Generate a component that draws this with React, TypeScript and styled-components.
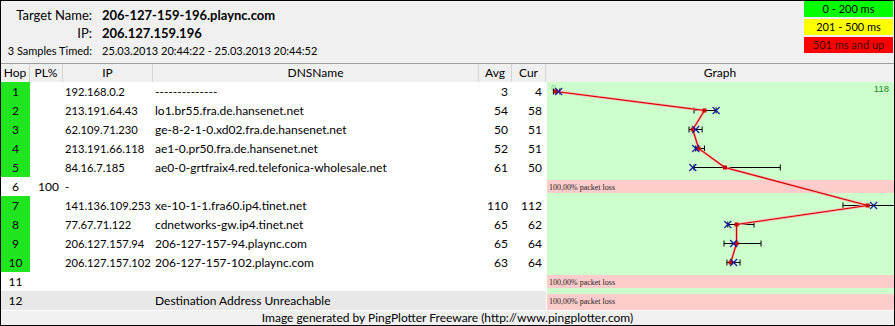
import React from "react";
import styled, { createGlobalStyle } from "styled-components";

const GlobalStyle = createGlobalStyle`
  html, body {
    margin: 0;
    padding: 0;
    background: #ffffff;
  }
  body {
    font-family: Lato, "Noto Sans", sans-serif;
    color: #000;
  }
`;

const COLS = "29px 33px 90px 326px 33px 34px";

// ms -> x inside the graph svg
const SCALE = 2.916;
const gx = (ms: number) => 1 + ms * SCALE;
const rowY = (i: number) => 9.5 + 19 * i;

interface Hop {
  hop: number;
  pl?: string;
  ip?: string;
  dns?: string;
  avg?: number;
  cur?: number;
  min?: number;
  max?: number;
  ok: boolean;
  shade?: boolean;
}

const hops: Hop[] = [
  { hop: 1, ip: "192.168.0.2", dns: "--------------", avg: 3, cur: 4, min: 2.2, max: 4.4, ok: true },
  { hop: 2, ip: "213.191.64.43", dns: "lo1.br55.fra.de.hansenet.net", avg: 54, cur: 58, min: 50.4, max: 58, ok: true },
  { hop: 3, ip: "62.109.71.230", dns: "ge-8-2-1-0.xd02.fra.de.hansenet.net", avg: 50, cur: 51, min: 48.7, max: 53.2, ok: true },
  { hop: 4, ip: "213.191.66.118", dns: "ae1-0.pr50.fra.de.hansenet.net", avg: 52, cur: 51, min: 51, max: 54, ok: true },
  { hop: 5, ip: "84.16.7.185", dns: "ae0-0-grtfraix4.red.telefonica-wholesale.net", avg: 61, cur: 50, min: 50.4, max: 80, ok: true },
  { hop: 6, pl: "100", ip: "-", ok: false },
  { hop: 7, ip: "141.136.109.253", dns: "xe-10-1-1.fra60.ip4.tinet.net", avg: 110, cur: 112, min: 101.5, max: 122, ok: true },
  { hop: 8, ip: "77.67.71.122", dns: "cdnetworks-gw.ip4.tinet.net", avg: 65, cur: 62, min: 62, max: 71, ok: true },
  { hop: 9, ip: "206.127.157.94", dns: "206-127-157-94.plaync.com", avg: 65, cur: 64, min: 60.7, max: 73.4, ok: true },
  { hop: 10, ip: "206.127.157.102", dns: "206-127-157-102.plaync.com", avg: 63, cur: 64, min: 61.7, max: 66.2, ok: true },
  { hop: 11, ok: false },
  { hop: 12, dns: "Destination Address Unreachable", ok: false, shade: true },
];

const Frame = styled.div`
  width: 893px;
  height: 324px;
  border: 1px solid #000;
  background: #f0f0f0;
  display: flex;
  flex-direction: column;
  overflow: hidden;
`;

const InfoBar = styled.div`
  height: 62px;
  display: flex;
  justify-content: space-between;
  align-items: flex-start;
`;

const InfoGrid = styled.div`
  display: grid;
  grid-template-columns: 91px auto;
  grid-template-rows: 19px 18px 17px;
  column-gap: 10px;
  align-items: center;
  padding-top: 4px;
`;

const Label = styled.div<{ $small?: boolean }>`
  text-align: right;
  font-size: ${(p) => (p.$small ? "11px" : "13px")};
  white-space: nowrap;
`;

const Value = styled.div<{ $small?: boolean }>`
  font-size: ${(p) => (p.$small ? "11px" : "13px")};
  font-weight: ${(p) => (p.$small ? 400 : 700)};
  white-space: nowrap;
`;

const Legend = styled.div`
  display: flex;
  flex-direction: column;
  gap: 2px;
  margin-right: 1px;
`;

const LegendBox = styled.div<{ $bg: string; $fg: string }>`
  width: 89px;
  height: 16px;
  line-height: 16px;
  text-align: center;
  font-size: 11px;
  background: ${(p) => p.$bg};
  color: ${(p) => p.$fg};
`;

const HeadRow = styled.div`
  display: grid;
  grid-template-columns: ${COLS} 1fr;
  height: 18px;
  border-top: 1px solid #a0a0a0;
  background: #f0f0f0;
`;

const HeadCell = styled.div<{ $last?: boolean }>`
  font-size: 12px;
  line-height: 18px;
  text-align: center;
  border-right: ${(p) => (p.$last ? "none" : "1px solid #d5d5d5")};
`;

const Body = styled.div`
  display: flex;
  height: 228px;
  background: #fff;
`;

const Columns = styled.div`
  width: 545px;
  display: flex;
  flex-direction: column;
`;

const DataRow = styled.div<{ $shade?: boolean }>`
  display: grid;
  grid-template-columns: ${COLS};
  height: 19px;
  font-size: 12px;
  line-height: 19px;
  background: ${(p) => (p.$shade ? "#e8e8e8" : "#fff")};
`;

const HopCell = styled.div<{ $ok: boolean }>`
  text-align: center;
  background: ${(p) => (p.$ok ? "#1ee51e" : "transparent")};
`;

const Cell = styled.div<{ $right?: boolean; $narrow?: boolean }>`
  white-space: nowrap;
  text-align: ${(p) => (p.$right ? "right" : "left")};
  padding: ${(p) => (p.$right ? "0 4px 0 0" : "0 0 0 2px")};
  font-size: ${(p) => (p.$narrow ? "11.2px" : "12px")};
`;

const Graph = styled.svg`
  display: block;
  width: 348px;
  height: 228px;
`;

const Footer = styled.div`
  height: 14px;
  border-top: 1px solid #fff;
  font-size: 12px;
  line-height: 14px;
  text-align: center;
  background: #f0f0f0;
`;

const Cross: React.FC<{ x: number; y: number }> = ({ x, y }) => (
  <g stroke="#1c1c9c" strokeWidth={1.2}>
    <line x1={x - 3.5} y1={y - 3.5} x2={x + 3.5} y2={y + 3.5} />
    <line x1={x - 3.5} y1={y + 3.5} x2={x + 3.5} y2={y - 3.5} />
  </g>
);

const PingGraph: React.FC = () => {
  const pts = hops
    .map((h, i) => (h.avg !== undefined ? `${gx(h.avg)},${rowY(i)}` : null))
    .filter(Boolean)
    .join(" ");
  return (
    <Graph viewBox="0 0 348 228">
      <rect x={1} y={0} width={347} height={228} fill="#ccffcc" />
      {hops.map((h, i) =>
        h.ok ? null : (
          <g key={h.hop}>
            <rect x={1} y={19 * i + 3} width={347} height={i === 11 ? 16 : 13} fill="#ffcccc" />
            <text x={3} y={19 * i + 13} fontFamily="'Liberation Serif', serif" fontSize={8} fill="#222">
              100,00% packet loss
            </text>
          </g>
        )
      )}
      <text x={5} y={9} fontFamily="'Liberation Sans', sans-serif" fontSize={9} fill="#88c888">0</text>
      <text x={343} y={10} textAnchor="end" fontFamily="'Liberation Sans', sans-serif" fontSize={9.5} fill="#2a8a2a">118</text>
      {hops.map((h, i) =>
        h.min !== undefined && h.max !== undefined ? (
          <g key={h.hop} stroke="#000" strokeWidth={1}>
            <line x1={gx(h.min)} y1={rowY(i)} x2={gx(h.max)} y2={rowY(i)} />
            <line x1={gx(h.min)} y1={rowY(i) - 3} x2={gx(h.min)} y2={rowY(i) + 3} />
            <line x1={gx(h.max)} y1={rowY(i) - 3} x2={gx(h.max)} y2={rowY(i) + 3} />
          </g>
        ) : null
      )}
      <polyline points={pts} fill="none" stroke="#ffaaaa" strokeWidth={2.6} />
      <polyline points={pts} fill="none" stroke="#cc0000" strokeWidth={1.1} />
      {hops.map((h, i) =>
        h.avg !== undefined ? (
          <rect key={h.hop} x={gx(h.avg) - 2} y={rowY(i) - 2} width={4} height={4} fill="#cc0000" />
        ) : null
      )}
      {hops.map((h, i) => (h.cur !== undefined ? <Cross key={h.hop} x={gx(h.cur)} y={rowY(i)} /> : null))}
    </Graph>
  );
};

export default function App() {
  return (
    <>
      <GlobalStyle />
      <Frame>
        <InfoBar>
          <InfoGrid>
            <Label>Target Name:</Label>
            <Value>206-127-159-196.plaync.com</Value>
            <Label>IP:</Label>
            <Value>206.127.159.196</Value>
            <Label $small>3 Samples Timed:</Label>
            <Value $small>25.03.2013 20:44:22 - 25.03.2013 20:44:52</Value>
          </InfoGrid>
          <Legend>
            <LegendBox $bg="#00ff00" $fg="#000">0 - 200 ms</LegendBox>
            <LegendBox $bg="#ffff00" $fg="#000">201 - 500 ms</LegendBox>
            <LegendBox $bg="#ff0000" $fg="#3a0000">501 ms and up</LegendBox>
          </Legend>
        </InfoBar>
        <HeadRow>
          <HeadCell>Hop</HeadCell>
          <HeadCell>PL%</HeadCell>
          <HeadCell>IP</HeadCell>
          <HeadCell>DNSName</HeadCell>
          <HeadCell>Avg</HeadCell>
          <HeadCell>Cur</HeadCell>
          <HeadCell $last>Graph</HeadCell>
        </HeadRow>
        <Body>
          <Columns>
            {hops.map((h) => (
              <DataRow key={h.hop} $shade={h.shade}>
                <HopCell $ok={h.ok}>{h.hop}</HopCell>
                <Cell $right>{h.pl}</Cell>
                <Cell $narrow>{h.ip}</Cell>
                <Cell>{h.dns}</Cell>
                <Cell $right>{h.avg}</Cell>
                <Cell $right>{h.cur}</Cell>
              </DataRow>
            ))}
          </Columns>
          <PingGraph />
        </Body>
        <Footer>Image generated by PingPlotter Freeware (http://www.pingplotter.com)</Footer>
      </Frame>
    </>
  );
}
